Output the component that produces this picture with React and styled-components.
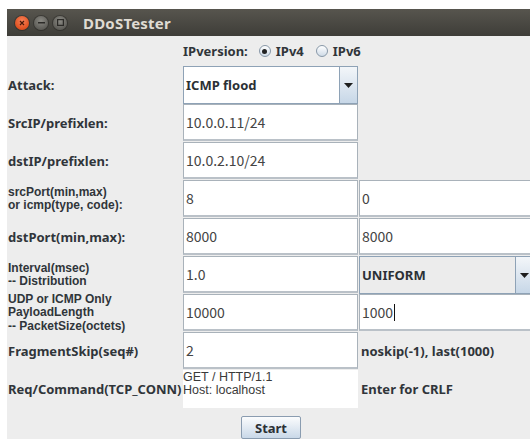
import React from 'react';
import styled, { createGlobalStyle } from 'styled-components';

const Global = createGlobalStyle`
    html, body {
        margin:0;
        padding:0;
        background:#ffffff;
        overflow:hidden;
    }
    body {
        font-family:"Noto Sans", "DejaVu Sans", sans-serif;
    }
`;

const Window = styled.div`
    margin:9px 0 0 7px;
    width:540px;
    height:440px;
    background-color:#ededed;
`;

const TitleBar = styled.div`
    height:27px;
    display:flex;
    align-items:center;
    padding-left:8px;
    gap:5px;
    background:linear-gradient(#57554e, #3e3d38);
    h1 {
        margin:0 0 0 11px;
        font-size:15px;
        font-weight:bold;
        color:#dfdbd2;
        letter-spacing:0.2px;
    }
`;

const WinButton = styled.span`
    width:14px;
    height:14px;
    border-radius:50%;
    display:flex;
    align-items:center;
    justify-content:center;
    background:${p => p.close
        ? 'radial-gradient(circle at 50% 35%, #f7825a, #e0501f 70%, #c4431a)'
        : 'radial-gradient(circle at 50% 35%, #8a8983, #5f5e59 70%, #4d4c47)'};
    box-shadow:0 0 0 1px rgba(0,0,0,0.25);
    svg {
        display:block;
    }
`;

const Form = styled.div`
    display:grid;
    grid-template-columns:176px 176px 176px;
    grid-template-rows:30px repeat(9, 38px) 30px;
`;

// multi-line captions use a tighter face so the stacked lines fit the row
const Label = styled.div`
    display:flex;
    align-items:center;
    padding-left:1px;
    font-family:${p => p.lines ? '"Liberation Sans", Arial, sans-serif' : '"Noto Sans", sans-serif'};
    font-size:${p => p.lines ? '12px' : '13px'};
    font-weight:bold;
    line-height:${p => p.lines ? '13.5px' : '16px'};
    color:#30353a;
    white-space:nowrap;
`;

const VersionRow = styled.div`
    grid-column:2 / span 2;
    display:flex;
    align-items:center;
    font-size:13px;
    font-weight:bold;
    color:#30353a;
    .title {
        margin-right:11px;
    }
    label {
        display:flex;
        align-items:center;
        gap:5px;
        margin-right:12px;
    }
`;

const Radio = styled.span`
    width:10px;
    height:10px;
    border-radius:50%;
    border:1px solid #8898a8;
    background:linear-gradient(#ffffff, #cfdbe7);
    display:flex;
    align-items:center;
    justify-content:center;
    &::after {
        content:'';
        width:5px;
        height:5px;
        border-radius:50%;
        background:#222;
        display:${p => p.checked ? 'block' : 'none'};
    }
`;

const Field = styled.div`
    box-sizing:border-box;
    height:37px;
    margin-right:1px;
    background:#ffffff;
    border:1px solid #a9b2ba;
    border-bottom:2px solid #bac1c8;
    display:flex;
    align-items:center;
    padding-left:2px;
    font-family:"Noto Sans CJK JP", "Noto Sans", sans-serif;
    font-size:14px;
    color:#444444;
`;

const Caret = styled.span`
    display:inline-block;
    width:1px;
    height:17px;
    background:#111;
    margin-left:1px;
`;

const Combo = styled.div`
    box-sizing:border-box;
    height:38px;
    margin-right:1px;
    display:flex;
    border:1px solid #8ea2b6;
    background:${p => p.flat ? '#ececec' : '#ffffff'};
    .value {
        flex:1;
        display:flex;
        align-items:center;
        padding-left:2px;
        font-size:13px;
        font-weight:bold;
        color:#2b3035;
        border-right:1px solid #8ea2b6;
    }
    .arrow {
        width:17px;
        display:flex;
        align-items:center;
        justify-content:center;
        background:linear-gradient(#f3f6f9, #c7d7e7);
    }
`;

const Notes = styled.div`
    display:flex;
    align-items:center;
    padding-left:2px;
    font-size:13px;
    font-weight:bold;
    color:#30353a;
    white-space:nowrap;
`;

const TextArea = styled.div`
    margin-right:1px;
    background:#ffffff;
    padding-top:1px;
    font-family:"Liberation Sans", Arial, sans-serif;
    font-size:12.5px;
    line-height:13px;
    color:#3a3a3a;
    white-space:pre;
`;

const ButtonCell = styled.div`
    display:flex;
    justify-content:center;
    align-items:flex-start;
    padding-top:8px;
`;

const StartButton = styled.button`
    width:60px;
    height:23px;
    border:1px solid #8a9cb0;
    border-radius:2px;
    background:linear-gradient(#fbfcfd, #c9d8e8);
    font-family:"Noto Sans", sans-serif;
    font-size:13px;
    font-weight:bold;
    color:#2b3035;
    padding:0;
`;

const Arrow = () => (
    <svg width="9" height="5" viewBox="0 0 9 5">
        <path d="M0 0h9L4.5 5z" fill="#1e1e1e"/>
    </svg>
);

const SelectBox = ({ value, flat }) => (
    <Combo flat={flat}>
        <span className="value">{value}</span>
        <span className="arrow"><Arrow/></span>
    </Combo>
);

export default function App() {
    return (
        <>
            <Global/>
            <Window>
                <TitleBar>
                    <WinButton close>
                        <svg width="6" height="6" viewBox="0 0 6 6">
                            <path d="M1 1l4 4M5 1l-4 4" stroke="#4a1a0a" strokeWidth="1.2"/>
                        </svg>
                    </WinButton>
                    <WinButton>
                        <svg width="7" height="2" viewBox="0 0 7 2">
                            <rect width="7" height="1.5" fill="#2c2b28"/>
                        </svg>
                    </WinButton>
                    <WinButton>
                        <svg width="7" height="7" viewBox="0 0 7 7">
                            <rect x="0.6" y="0.6" width="5.8" height="5.8" fill="none" stroke="#2c2b28" strokeWidth="1.2"/>
                        </svg>
                    </WinButton>
                    <h1>DDoSTester</h1>
                </TitleBar>

                <Form>
                    <div/>
                    <VersionRow>
                        <span className="title">IPversion:</span>
                        <label><Radio checked/>IPv4</label>
                        <label><Radio/>IPv6</label>
                    </VersionRow>

                    <Label>Attack:</Label>
                    <SelectBox value="ICMP flood"/>
                    <div/>

                    <Label>SrcIP/prefixlen:</Label>
                    <Field>10.0.0.11/24</Field>
                    <div/>

                    <Label>dstIP/prefixlen:</Label>
                    <Field>10.0.2.10/24</Field>
                    <div/>

                    <Label lines>srcPort(min,max)<br/>or icmp(type, code):</Label>
                    <Field>8</Field>
                    <Field>0</Field>

                    <Label>dstPort(min,max):</Label>
                    <Field>8000</Field>
                    <Field>8000</Field>

                    <Label lines>Interval(msec)<br/>-- Distribution</Label>
                    <Field>1.0</Field>
                    <SelectBox value="UNIFORM" flat/>

                    <Label lines>UDP or ICMP Only<br/>PayloadLength<br/>-- PacketSize(octets)</Label>
                    <Field>10000</Field>
                    <Field>1000<Caret/></Field>

                    <Label>FragmentSkip(seq#)</Label>
                    <Field>2</Field>
                    <Notes>noskip(-1), last(1000)</Notes>

                    <Label>Req/Command(TCP_CONN)</Label>
                    <TextArea>{'GET / HTTP/1.1\nHost: localhost'}</TextArea>
                    <Notes>Enter for CRLF</Notes>

                    <div/>
                    <ButtonCell>
                        <StartButton>Start</StartButton>
                    </ButtonCell>
                    <div/>
                </Form>
            </Window>
        </>
    );
}
